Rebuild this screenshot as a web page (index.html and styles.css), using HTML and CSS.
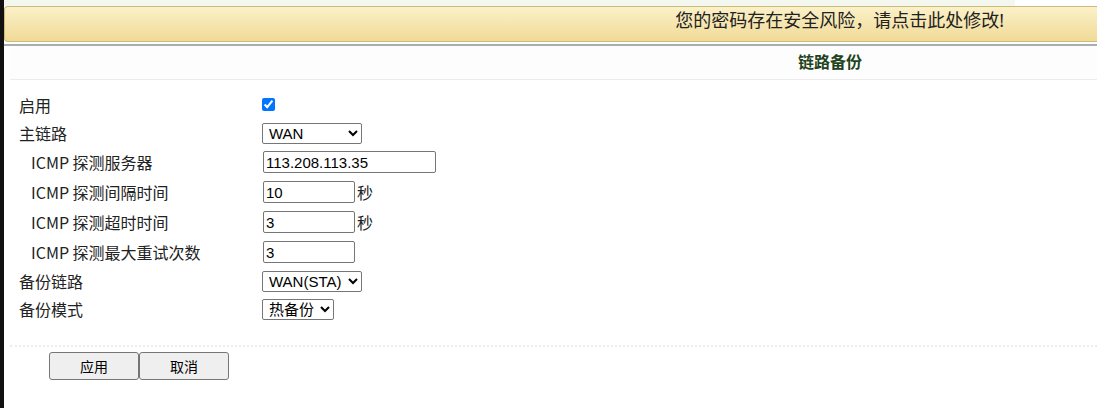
FILE: index.html
```html
<!DOCTYPE html>
<html lang="zh-CN">
<head>
    <meta charset="utf-8">
    <title>链路备份</title>
    <link rel="stylesheet" href="styles.css">
</head>
<body>
    <div class="side_bar"></div>
    <div class="main">
        <div class="top_strip"></div>
        <div class="warn_box">
            <a class="warn_text">您的密码存在安全风险，请点击此处修改!</a>
        </div>
        <div class="warn_line"></div>
        <div class="panel">
            <div class="panel_head">链路备份</div>
            <form class="form_box">
                <div class="row row_cb">
                    <label class="lbl">启用</label>
                    <input type="checkbox" class="cb" checked>
                </div>
                <div class="row">
                    <label class="lbl">主链路</label>
                    <select class="sel sel_wide"><option>WAN</option></select>
                </div>
                <div class="row row_in">
                    <label class="lbl sub">ICMP 探测服务器</label>
                    <input type="text" class="txt txt_long" value="113.208.113.35">
                </div>
                <div class="row row_in">
                    <label class="lbl sub">ICMP 探测间隔时间</label>
                    <input type="text" class="txt txt_short" value="10"><span class="unit">秒</span>
                </div>
                <div class="row row_in">
                    <label class="lbl sub">ICMP 探测超时时间</label>
                    <input type="text" class="txt txt_short" value="3"><span class="unit">秒</span>
                </div>
                <div class="row row_in">
                    <label class="lbl sub">ICMP 探测最大重试次数</label>
                    <input type="text" class="txt txt_short" value="3">
                </div>
                <div class="row">
                    <label class="lbl">备份链路</label>
                    <select class="sel sel_wide"><option>WAN(STA)</option></select>
                </div>
                <div class="row">
                    <label class="lbl">备份模式</label>
                    <select class="sel sel_small"><option>热备份</option></select>
                </div>
                <div class="btn_line">
                    <button type="button" class="btn">应用</button><button type="button" class="btn">取消</button>
                </div>
            </form>
        </div>
    </div>
</body>
</html>
```

FILE: styles.css
```css
body {
    margin: 0;
    display: flex;
    min-height: 100vh;
    background-color: #ffffff;
    font-family: "Noto Sans", "Noto Sans CJK SC", sans-serif;
    color: #222;
}
.side_bar {
    width: 4px;
    background-color: #111;
    flex-shrink: 0;
}
.main {
    flex: 1;
}
.top_strip {
    height: 6px;
    background: linear-gradient(to right, #f3f7ee 92.5%, #ffffff 92.5%);
}
.warn_box {
    height: 34px;
    border: 1px solid #cdbb7c;
    border-right: none;
    border-radius: 4px 0 0 4px;
    background: linear-gradient(to bottom, #fbf1c9, #f0da96);
    text-align: right;
    padding-right: 93px;
    line-height: 27px;
}
.warn_text {
    font-size: 18px;
    color: #222;
    cursor: pointer;
}
.warn_line {
    margin-top: 2px;
    height: 2px;
    background-color: #a9adaf;
}
.panel {
    padding-left: 6px;
}
.panel_head {
    height: 33px;
    line-height: 33px;
    border-bottom: 1px solid #ececec;
    background-color: #fdfdfd;
    text-align: right;
    padding-right: 235px;
    font-size: 16px;
    font-weight: bold;
    color: #1f431c;
}
.form_box {
    margin-top: 10px;
}
.row {
    display: flex;
    align-items: center;
    height: 28px;
    padding-left: 9px;
}
.row_cb {
    height: 29px;
}
.row_in {
    height: 30px;
}
.lbl {
    width: 243px;
    font-size: 16px;
    font-family: "Noto Sans CJK SC", sans-serif;
}
.lbl.sub {
    width: 231px;
    padding-left: 12px;
}
.cb {
    margin: 0;
    width: 13px;
    height: 13px;
    accent-color: #0075ff;
}
.sel {
    height: 21px;
    font-family: "Liberation Sans", "Noto Sans CJK SC", sans-serif;
    font-size: 15px;
    color: #000;
    border: 1px solid #767676;
    border-radius: 2px;
    background-color: #fff;
    padding: 0 0 0 2px;
    margin: 0;
}
.sel_wide {
    width: 100px;
}
.sel_small {
    width: 72px;
}
.txt {
    height: 22px;
    box-sizing: border-box;
    margin: 0 0 0 1px;
    padding: 1px 2px;
    border: 1px solid #767676;
    border-radius: 2px;
    font-family: "Liberation Sans", sans-serif;
    font-size: 15px;
    color: #000;
}
.txt_long {
    width: 173px;
}
.txt_short {
    width: 92px;
}
.unit {
    margin-left: 2px;
    font-size: 16px;
    font-family: "Noto Sans CJK SC", sans-serif;
}
.btn_line {
    margin-top: 22px;
    border-top: 2px dotted #ececec;
    padding: 5px 0 0 39px;
}
.btn {
    width: 90px;
    height: 28px;
    margin: 0;
    background-color: #efefef;
    border: 1px solid #767676;
    border-radius: 3px;
    font-family: "Noto Sans CJK SC", sans-serif;
    font-size: 14px;
    color: #000;
}
```
